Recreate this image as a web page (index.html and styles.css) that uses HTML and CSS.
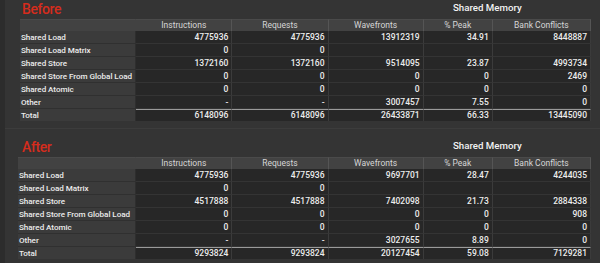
FILE: index.html
```html
<!DOCTYPE html>
<html>
<head>
<meta charset="utf-8">
<link rel="stylesheet" href="styles.css">
</head>
<body>
<div class="page">
  <section class="panel panel-before">
    <div class="panel-head">
      <h2 class="panel-title">Before</h2>
      <div class="group-title">Shared Memory</div>
    </div>
    <table class="stats">
      <colgroup>
        <col class="c-label"><col class="c-num"><col class="c-num"><col class="c-wave"><col class="c-peak"><col class="c-bank">
      </colgroup>
      <thead>
        <tr><th></th><th>Instructions</th><th>Requests</th><th>Wavefronts</th><th>% Peak</th><th>Bank Conflicts</th></tr>
      </thead>
      <tbody>
        <tr><td class="label">Shared Load</td><td>4775936</td><td>4775936</td><td>13912319</td><td>34.91</td><td>8448887</td></tr>
        <tr><td class="label">Shared Load Matrix</td><td>0</td><td>0</td><td></td><td></td><td></td></tr>
        <tr><td class="label">Shared Store</td><td>1372160</td><td>1372160</td><td>9514095</td><td>23.87</td><td>4993734</td></tr>
        <tr><td class="label">Shared Store From Global Load</td><td>0</td><td>0</td><td>0</td><td>0</td><td>2469</td></tr>
        <tr><td class="label">Shared Atomic</td><td>0</td><td>0</td><td>0</td><td>0</td><td>0</td></tr>
        <tr><td class="label">Other</td><td>-</td><td>-</td><td>3007457</td><td>7.55</td><td>0</td></tr>
        <tr class="total"><td class="label">Total</td><td>6148096</td><td>6148096</td><td>26433871</td><td>66.33</td><td>13445090</td></tr>
      </tbody>
    </table>
  </section>
  <section class="panel panel-after">
    <div class="panel-head">
      <h2 class="panel-title">After</h2>
      <div class="group-title">Shared Memory</div>
    </div>
    <table class="stats">
      <colgroup>
        <col class="c-label"><col class="c-num"><col class="c-num"><col class="c-wave"><col class="c-peak"><col class="c-bank">
      </colgroup>
      <thead>
        <tr><th></th><th>Instructions</th><th>Requests</th><th>Wavefronts</th><th>% Peak</th><th>Bank Conflicts</th></tr>
      </thead>
      <tbody>
        <tr><td class="label">Shared Load</td><td>4775936</td><td>4775936</td><td>9697701</td><td>28.47</td><td>4244035</td></tr>
        <tr><td class="label">Shared Load Matrix</td><td>0</td><td>0</td><td></td><td></td><td></td></tr>
        <tr><td class="label">Shared Store</td><td>4517888</td><td>4517888</td><td>7402098</td><td>21.73</td><td>2884338</td></tr>
        <tr><td class="label">Shared Store From Global Load</td><td>0</td><td>0</td><td>0</td><td>0</td><td>908</td></tr>
        <tr><td class="label">Shared Atomic</td><td>0</td><td>0</td><td>0</td><td>0</td><td>0</td></tr>
        <tr><td class="label">Other</td><td>-</td><td>-</td><td>3027655</td><td>8.89</td><td>0</td></tr>
        <tr class="total"><td class="label">Total</td><td>9293824</td><td>9293824</td><td>20127454</td><td>59.08</td><td>7129281</td></tr>
      </tbody>
    </table>
  </section>
</div>
</body>
</html>
```
FILE: styles.css
```css
html, body {
  margin: 0;
  padding: 0;
  background: #343434;
}
body {
  font-family: Roboto, "Liberation Sans", sans-serif;
  color: #e6e6e6;
  width: 600px;
  height: 263px;
  overflow: hidden;
}
.page {
  border-left: 5px solid #2c2c2c;
  height: 263px;
  box-sizing: border-box;
}
.panel {
  padding-left: 15px;
}
.panel-after {
  margin-top: 7px;
  border-top: 1px solid #3c3c3c;
  padding-top: 9px;
  padding-left: 13px;
}
.panel-head {
  height: 19px;
  display: grid;
  grid-template-columns: 433px auto;
  align-items: start;
}
.panel-after .panel-head {
  grid-template-columns: 435px auto;
}
.panel-title {
  margin: 0;
  font-family: Roboto, "Liberation Sans", sans-serif;
  font-weight: 500;
  font-size: 14px;
  letter-spacing: -0.4px;
  line-height: 15px;
  padding: 2px 0 0 2px;
  color: #d52c1d;
}
.panel-after .panel-title {
  padding-left: 4px;
}
.group-title {
  font-size: 9.7px;
  font-weight: 500;
  line-height: 12px;
  padding-top: 2px;
  color: #f2f2f2;
}
.stats {
  border-collapse: separate;
  border-spacing: 0;
  table-layout: fixed;
  width: 571px;
  font-size: 8.5px;
}
.c-label { width: 116px; }
.panel-after .c-label { width: 118px; }
.c-num { width: 96px; }
.c-wave { width: 95px; }
.c-peak { width: 69px; }
.c-bank { width: 98px; }
.panel-after .stats { width: 573px; }
.stats th {
  height: 11px;
  padding: 0;
  background: #424242;
  border-top: 1px solid #4a4a4a;
  border-right: 1px solid #555555;
  font-weight: normal;
  color: #d6d6d6;
  text-align: center;
  line-height: 11px;
}
.stats th:first-child {
  border-right: 1px solid #424242;
}
.stats td {
  height: 12px;
  padding: 0 3px 0 0;
  background: #272727;
  border-bottom: 1px solid #343434;
  border-right: 1px solid #3b3b3b;
  text-align: right;
  line-height: 12px;
  font-weight: 500;
  color: #ededed;
  white-space: nowrap;
  overflow: hidden;
}
.stats td.label {
  text-align: left;
  padding: 0 0 0 1px;
  background: #3b3b3b;
  border-right: 1px solid #2e2e2e;
  border-bottom: 1px solid #303030;
  font-size: 8.1px;
  letter-spacing: -0.05px;
  font-weight: 500;
  color: #ebebeb;
}
.stats tr.total td {
  border-top: 1px solid #9a9a9a;
  height: 11px;
  line-height: 11px;
  border-bottom: none;
}
.stats tr.total td.label {
  border-top: 1px solid #3b3b3b;
}
```
